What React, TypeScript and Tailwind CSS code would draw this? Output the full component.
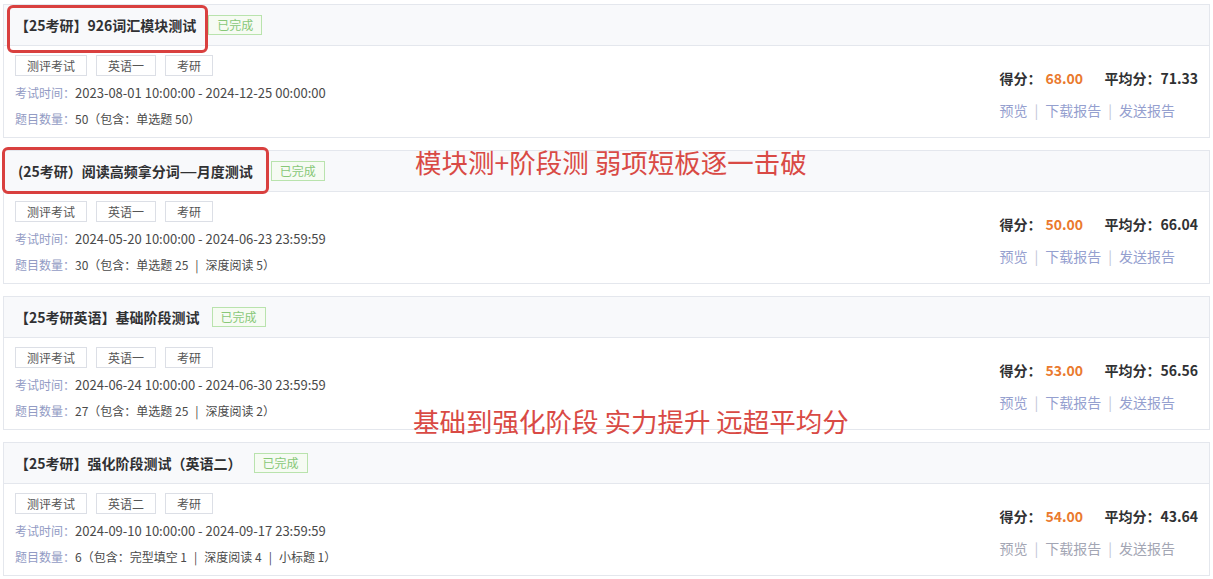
type Exam = {
  title: React.ReactNode
  tags: string[]
  time: string
  count: string
  score: string
  avg: string
  muted?: boolean
}

const exams: Exam[] = [
  {
    title: '【25考研】926词汇模块测试',
    tags: ['测评考试', '英语一', '考研'],
    time: '2023-08-01 10:00:00 - 2024-12-25 00:00:00',
    count: '50（包含：单选题 50）',
    score: '68.00',
    avg: '71.33',
  },
  {
    title: (
      <span className="pr-[6px]">
        <span className="pl-[3px]">(</span>25考研）阅读高频拿分词
        <span className="inline-block w-[17px] text-center scale-x-[1.4]">—</span>月度测试
      </span>
    ),
    tags: ['测评考试', '英语一', '考研'],
    time: '2024-05-20 10:00:00 - 2024-06-23 23:59:59',
    count: '30（包含：单选题 25 | 深度阅读 5）',
    score: '50.00',
    avg: '66.04',
  },
  {
    title: '【25考研英语】基础阶段测试',
    tags: ['测评考试', '英语一', '考研'],
    time: '2024-06-24 10:00:00 - 2024-06-30 23:59:59',
    count: '27（包含：单选题 25 | 深度阅读 2）',
    score: '53.00',
    avg: '56.56',
  },
  {
    title: '【25考研】强化阶段测试（英语二）',
    tags: ['测评考试', '英语二', '考研'],
    time: '2024-09-10 10:00:00 - 2024-09-17 23:59:59',
    count: '6（包含：完型填空 1 | 深度阅读 4 | 小标题 1）',
    score: '54.00',
    avg: '43.64',
    muted: true,
  },
]

function ExamCard({ exam }: { exam: Exam }) {
  const link = exam.muted ? 'text-[#a3a6b4]' : 'text-[#95a0cf]'
  const parts = exam.count.split(' | ')
  return (
    <div className="border border-[#e4e7ed] bg-white h-[134px] flex flex-col">
      <div className="h-[41px] shrink-0 bg-[#f8f9fb] border-b border-[#e4e7ed] flex items-center px-[11px] gap-3">
        <span className="text-[14px] font-bold text-[#303133]">{exam.title}</span>
        <span className="h-[20px] px-[8px] flex items-center border border-[#b9e3ad] bg-[#f6fbf3] text-[#88c878] text-[12px]">
          已完成
        </span>
      </div>
      <div className="flex-1 flex justify-between px-[11px]">
        <div className="pt-[9px]">
          <div className="flex gap-[9px]">
            {exam.tags.map((t) => (
              <span
                key={t}
                className="h-[21px] px-[11px] flex items-center border border-[#dcdfe6] text-[12px] text-[#555]"
              >
                {t}
              </span>
            ))}
          </div>
          <div className="mt-[4px] leading-[26px] text-[12px] text-[#4a4a4a]">
            <span className="text-[#929bc4]">考试时间：</span>
            <span className="text-[13px]">{exam.time}</span>
          </div>
          <div className="leading-[26px] text-[12px] text-[#4a4a4a]">
            <span className="text-[#929bc4]">题目数量：</span>
            {parts.map((p, i) => (
              <span key={i}>
                {i > 0 && <span className="mx-[7px]">|</span>}
                {p}
              </span>
            ))}
          </div>
        </div>
        <div className="flex flex-col pt-[21px] gap-[10px]">
          <div className="h-[22px] flex items-center text-[14px] font-bold text-[#303133]">
            <span>得分：</span>
            <span className="text-[#ea7a2e] ml-[4px] w-[59px]">{exam.score}</span>
            <span>平均分：{exam.avg}</span>
          </div>
          <div className={`h-[22px] flex items-center text-[14px] ${link}`}>
            <span>预览</span>
            <span className="mx-[7px] text-[#c0c4d6]">|</span>
            <span>下载报告</span>
            <span className="mx-[7px] text-[#c0c4d6]">|</span>
            <span>发送报告</span>
          </div>
        </div>
      </div>
    </div>
  )
}

export default function App() {
  return (
    <div
      className="relative w-[1213px] h-[579px] overflow-hidden bg-white px-[3px] pt-[4px]"
      style={{ fontFamily: '"Microsoft YaHei", "Noto Sans CJK SC", sans-serif' }}
    >
      <div className="flex flex-col gap-[12px]">
        {exams.map((e, i) => (
          <ExamCard key={i} exam={e} />
        ))}
      </div>

      {/* highlight boxes */}
      <div className="absolute left-[7px] top-[5px] w-[201px] h-[48px] border-[3px] border-[#d9403f] rounded-[6px]" />
      <div className="absolute left-[2px] top-[147px] w-[267px] h-[47px] border-[3px] border-[#d9403f] rounded-[6px]" />

      {/* annotations */}
      <div className="absolute left-[415px] top-[145px] text-[26.5px] leading-[34px] text-[#d94a45] whitespace-nowrap">
        模块测+阶段测 弱项短板逐一击破
      </div>
      <div className="absolute left-[413px] top-[404px] text-[26.5px] leading-[34px] text-[#d94a45] whitespace-nowrap">
        基础到强化阶段 实力提升 远超平均分
      </div>
    </div>
  )
}
